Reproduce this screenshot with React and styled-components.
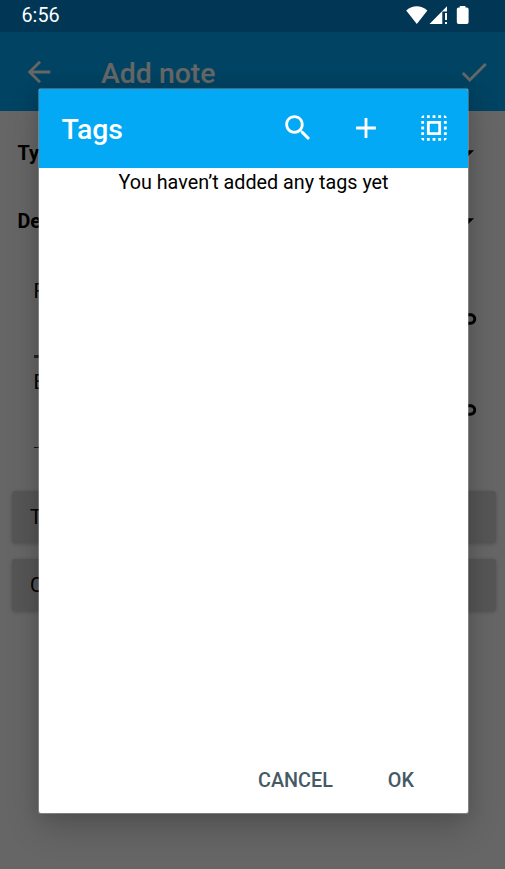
import React from "react";
import styled, { createGlobalStyle } from "styled-components";

const GlobalStyle = createGlobalStyle`
  * { box-sizing: border-box; }
  html, body { margin: 0; padding: 0; overflow: hidden; }
  body { font-family: Roboto, sans-serif; background: #fff; }
  button { font: inherit; border: 0; background: none; padding: 0; color: inherit; }
`;

const Screen = styled.div`
  position: relative;
  width: 505px;
  height: 869px;
  overflow: hidden;
  display: flex;
  flex-direction: column;
  background: #fff;
`;

const StatusBar = styled.header`
  position: relative;
  z-index: 2;
  height: 32px;
  flex: none;
  display: flex;
  justify-content: space-between;
  padding: 0 36px 0 21.5px;
  background: #013654;
  color: #fff;
`;

const Clock = styled.span`
  font-size: 19.8px;
  line-height: 32px;
`;

const AppBar = styled.div`
  height: 79px;
  flex: none;
  display: flex;
  align-items: center;
  padding: 0 14px 0 22px;
  background: #03a9f4;
  color: #fff;
`;

const Title = styled.h1`
  margin: 0;
  flex: 1;
  padding-left: ${(p) => p.$inset}px;
  padding-top: ${(p) => p.$drop}px;
  font-size: 28.4px;
  line-height: 34px;
  font-weight: 500;
`;

const IconButton = styled.button`
  display: flex;
  width: 34px;
  height: 34px;
`;

const Form = styled.main`
  display: flex;
  flex-direction: column;
  padding: 8px 9.5px 0 11.5px;
  color: #000;
`;

const SpinnerRow = styled.div`
  height: 68px;
  display: flex;
  align-items: center;
  justify-content: space-between;
  padding: 0 11.5px 0 6px;
  font-size: 19.8px;
  font-weight: 700;
`;

const Field = styled.div`
  height: 91px;
  padding: 0 16.5px 0 22px;
  display: grid;
  grid-template-columns: 1fr 34px;
  grid-template-rows: 22px auto;
  font-size: 19.8px;
`;

const FieldLabel = styled.div`
  grid-column: 1 / -1;
  line-height: 24px;
`;

const FieldLine = styled.div`
  height: ${(p) => (p.$focused ? 56 : 55)}px;
  border-bottom: ${(p) => (p.$focused ? "3px solid #455a64" : "1px solid #333")};
`;

const Fields = styled.section`
  padding-top: 25px;
  height: 236px;
`;

const ChipButton = styled.button`
  height: 52px;
  margin-bottom: 16px;
  padding-left: 18.5px;
  padding-top: 1px;
  text-align: left;
  font-size: 19.8px;
  border-radius: 3px;
  background: #d6d7d7;
  box-shadow: 0 1px 4px rgba(0, 0, 0, 0.22);
`;

const Scrim = styled.div`
  position: absolute;
  inset: 0;
  z-index: 1;
  padding: 89px 37px 56px 39px;
  background: rgba(0, 0, 0, 0.6);
`;

const Dialog = styled.section`
  height: 724px;
  display: flex;
  flex-direction: column;
  border-radius: 2px;
  overflow: hidden;
  background: #fff;
  box-shadow: 0 0 0 1px rgba(255, 255, 255, 0.25), 0 15px 34px rgba(0, 0, 0, 0.2),
    0 0 16px rgba(0, 0, 0, 0.1);
`;

const DialogBar = styled.div`
  height: 79px;
  flex: none;
  display: flex;
  align-items: center;
  padding: 0 17px 1px 22.5px;
  background: #03a9f4;
  color: #fff;
`;

const Actions = styled.div`
  display: flex;
  gap: 34px;
`;

const EmptyMessage = styled.p`
  margin: 0;
  flex: 1;
  padding-top: 3px;
  text-align: center;
  font-size: 19.75px;
  line-height: 24px;
  color: #000;
`;

const DialogActions = styled.footer`
  display: flex;
  justify-content: flex-end;
  gap: 55px;
  height: 44px;
  padding-right: 54px;
`;

const TextButton = styled.button`
  height: 23px;
  line-height: 23px;
  font-size: 19.8px;
  font-weight: 500;
  color: #455a64;
`;

const paths = {
  back: "M20 11H7.83l5.59-5.59L12 4l-8 8 8 8 1.41-1.41L7.83 13H20v-2z",
  check: "M9 16.17L4.83 12l-1.42 1.41L9 19 21 7l-1.41-1.41z",
  search:
    "M15.5 14h-.79l-.28-.27C15.41 12.59 16 11.11 16 9.5 16 5.91 13.09 3 9.5 3S3 5.91 3 9.5 5.91 16 9.5 16c1.61 0 3.09-.59 4.23-1.57l.27.28v.79l5 4.99L20.49 19l-4.99-5zm-6 0C7.01 14 5 11.99 5 9.5S7.01 5 9.5 5 14 7.01 14 9.5 11.99 14 9.5 14z",
  add: "M19 13h-6v6h-2v-6H5v-2h6V5h2v6h6v2z",
  selectAll:
    "M3 5h2V3c-1.1 0-2 .9-2 2zm0 8h2v-2H3v2zm4 8h2v-2H7v2zM3 9h2V7H3v2zm10-6h-2v2h2V3zm6 0v2h2c0-1.1-.9-2-2-2zM5 21v-2H3c0 1.1.9 2 2 2zm-2-4h2v-2H3v2zM9 3H7v2h2V3zm2 18h2v-2h-2v2zm8-8h2v-2h-2v2zm0 8c1.1 0 2-.9 2-2h-2v2zm0-12h2V7h-2v2zm0 8h2v-2h-2v2zm-4 4h2v-2h-2v2zm0-16h2V3h-2v2zM7 17h10V7H7v10zm2-8h6v6H9V9z",
  dropDown: "M7 10l5 5 5-5z",
  attachment:
    "M2 13.5C2 10.46 4.46 8 7.5 8H18c2.21 0 4 1.79 4 4s-1.79 4-4 4H9.5C8.12 16 7 14.88 7 13.5H8.6c0 .3.3.5.9.5H18c1.1 0 2-.9 2-2s-.9-2-2-2H7.5C5.57 10 4 11.57 4 13.5z",
};

const Icon = ({ name }) => (
  <svg width="34" height="34" viewBox="0 0 24 24" fill="currentColor" aria-hidden="true">
    <path d={paths[name]} />
  </svg>
);

const StatusIcons = () => (
  <svg width="64" height="32" viewBox="405 0 64 32" fill="#fff" aria-hidden="true">
    <path d="M406.2 10.4Q416.7 2.2 427.4 10.4L416.8 24Z" />
    <path d="M429.5 24L447 6.3V11.5H442.3V24Z" />
    <path d="M445 13h2v7h-2zM445 22h2v2h-2z" />
    <path d="M459.8 6h5.6v1.4h1.4q1.8 0 1.8 1.8v13q0 1.8-1.8 1.8h-8.2q-1.8 0-1.8-1.8v-13q0-1.8 1.8-1.8h1.2z" />
  </svg>
);

export default function App() {
  return (
    <Screen>
      <GlobalStyle />
      <StatusBar>
        <Clock>6:56</Clock>
        <StatusIcons />
      </StatusBar>
      <AppBar>
        <IconButton aria-label="Back"><Icon name="back" /></IconButton>
        <Title $inset={45} $drop={4}>Add note</Title>
        <IconButton aria-label="Save"><Icon name="check" /></IconButton>
      </AppBar>
      <Form>
        <SpinnerRow>Type:<Icon name="dropDown" /></SpinnerRow>
        <SpinnerRow>Deck:<Icon name="dropDown" /></SpinnerRow>
        <Fields>
          <Field>
            <FieldLabel>Front</FieldLabel>
            <FieldLine $focused />
            <Icon name="attachment" />
          </Field>
          <Field>
            <FieldLabel>Back</FieldLabel>
            <FieldLine />
            <Icon name="attachment" />
          </Field>
        </Fields>
        <ChipButton>Tags:</ChipButton>
        <ChipButton>Cards:</ChipButton>
      </Form>
      <Scrim>
        <Dialog role="dialog">
          <DialogBar>
            <Title $inset={0} $drop={3}>Tags</Title>
            <Actions>
              <IconButton aria-label="Search"><Icon name="search" /></IconButton>
              <IconButton aria-label="Add tag"><Icon name="add" /></IconButton>
              <IconButton aria-label="Select all"><Icon name="selectAll" /></IconButton>
            </Actions>
          </DialogBar>
          <EmptyMessage>You haven’t added any tags yet</EmptyMessage>
          <DialogActions>
            <TextButton>CANCEL</TextButton>
            <TextButton>OK</TextButton>
          </DialogActions>
        </Dialog>
      </Scrim>
    </Screen>
  );
}
